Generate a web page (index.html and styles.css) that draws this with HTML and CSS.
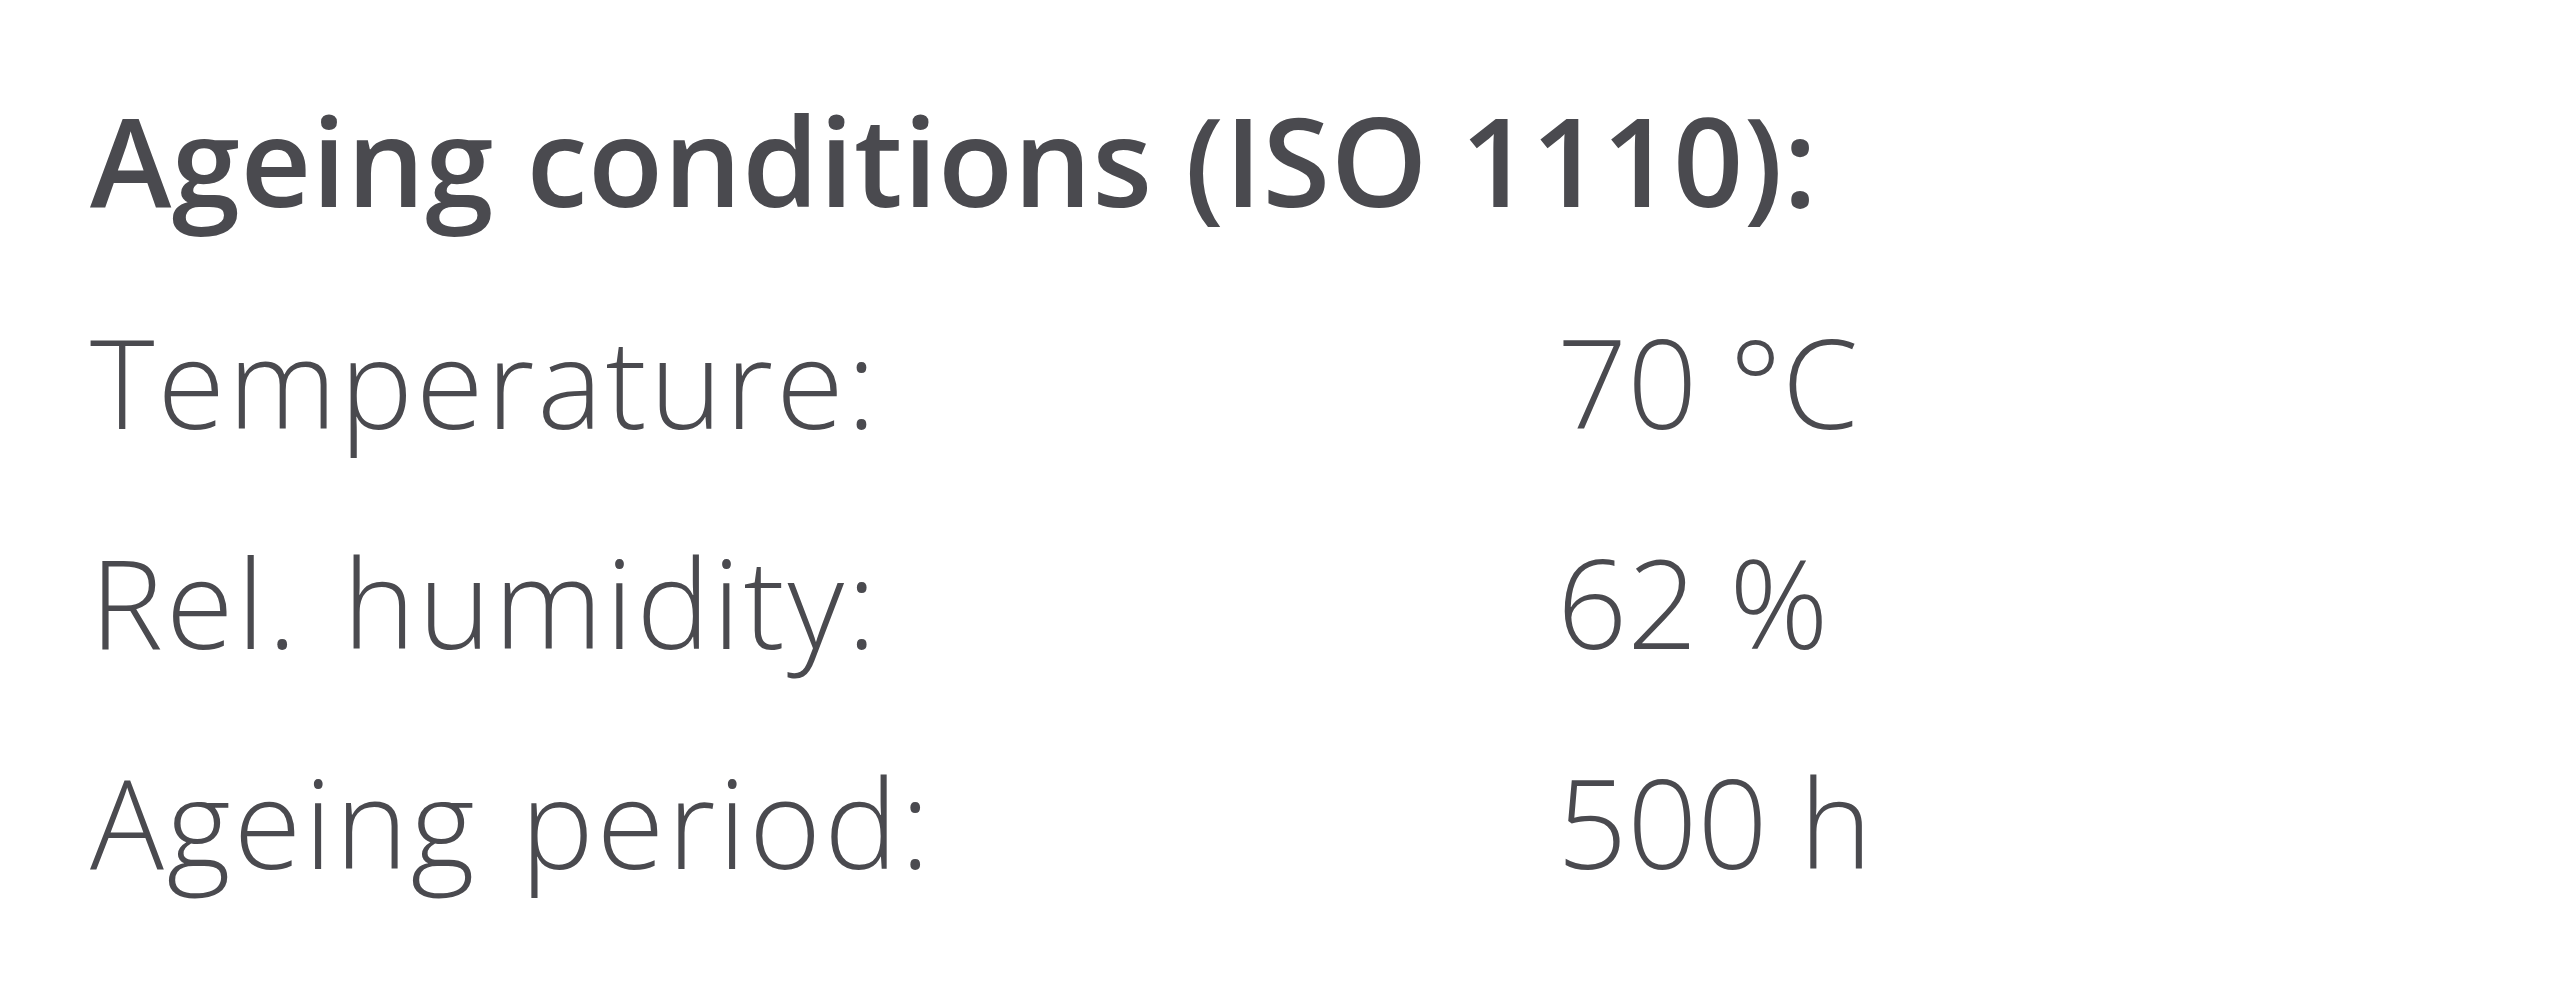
FILE: index.html
```html
<!DOCTYPE html>
<html>
<head>
<meta charset="utf-8">
<link rel="stylesheet" href="styles.css">
</head>
<body>
<div class="sheet">
  <h1 class="title">Ageing conditions (ISO 1110):</h1>
  <div class="table">
    <div class="label">Temperature:</div><div class="value">70 °C</div>
    <div class="label">Rel. humidity:</div><div class="value">62 %</div>
    <div class="label">Ageing period:</div><div class="value">500 h</div>
  </div>
</div>
</body>
</html>
```
FILE: styles.css
```css
html, body {
  margin: 0;
  padding: 0;
  background: #ffffff;
}
.sheet {
  padding: 50px 0 0 90px;
  font-family: "Open Sans", "Liberation Sans", sans-serif;
  font-variant-ligatures: none;
  color: #4a4a4f;
}
.title {
  margin: 0;
  font-size: 123px;
  font-weight: 600;
  letter-spacing: 0.5px;
  line-height: 220px;
}
.table {
  display: grid;
  grid-template-columns: 1467px auto;
  margin-top: 2px;
  font-size: 123px;
  font-weight: 360;
  line-height: 220px;
}
.label {
  letter-spacing: 3px;
  word-spacing: 8px;
}
.label, .value {
  white-space: nowrap;
}
```
